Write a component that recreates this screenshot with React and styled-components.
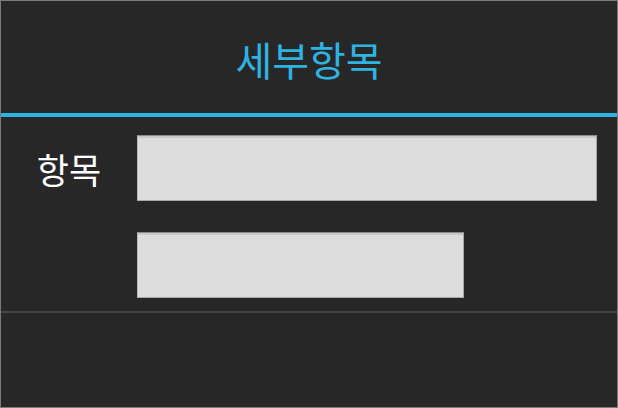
import React from 'react';
import styled, { createGlobalStyle } from 'styled-components';

const GlobalStyle = createGlobalStyle`
    html, body{
        margin: 0;
        padding: 0;
        background: #272727;
    }
    body{
        font-family: "Noto Sans CJK KR", "Noto Sans", sans-serif;
    }
`;

export default function App(){
    const fields = [
        { label: '항목', width: 460 },
        { label: '', width: 327 },
    ];

    return (
        <>
            <GlobalStyle />
            <Panel>
                <Header>
                    <h1>세부항목</h1>
                </Header>
                <Body>
                    {fields.map((f, i) =>
                        <Row key={i}>
                            <Label>{f.label}</Label>
                            <Field width={f.width} />
                        </Row>
                    )}
                </Body>
                <Footer />
            </Panel>
        </>
    );
}

const Panel = styled.div`
    width: 618px;
    height: 408px;
    box-sizing: border-box;
    border: 1px solid #7a7a7a;
    background: #272727;
    display: flex;
    flex-direction: column;
`;

const Header = styled.div`
    height: 112px;
    border-bottom: 4px solid #2fb3e3;
    display: flex;
    align-items: center;
    justify-content: center;
    h1{
        margin: 0;
        padding-top: 4px;
        font-size: 40px;
        font-weight: 400;
        line-height: 1;
        color: #2fb3e3;
    }
`;

const Body = styled.div`
    display: flex;
    flex-direction: column;
    gap: 31px;
    padding: 18px 0 13px;
    border-bottom: 2px solid #444444;
`;

const Row = styled.div`
    display: flex;
    align-items: center;
`;

const Label = styled.div`
    width: 136px;
    text-align: center;
    font-size: 35px;
    color: #ffffff;
    line-height: 1;
`;

const Field = styled.div`
    width: ${p => p.width}px;
    height: 66px;
    box-sizing: border-box;
    background: #dcdcdc;
    border-top: 1px solid #8a8a8a;
    border-bottom: 1px solid #a8a8a8;
    border-left: 1px solid #b8b8b8;
    border-right: 1px solid #a8a8a8;
    box-shadow: inset 0 2px 0 #c8c8c8;
`;

const Footer = styled.div`
    flex: 1;
`;
